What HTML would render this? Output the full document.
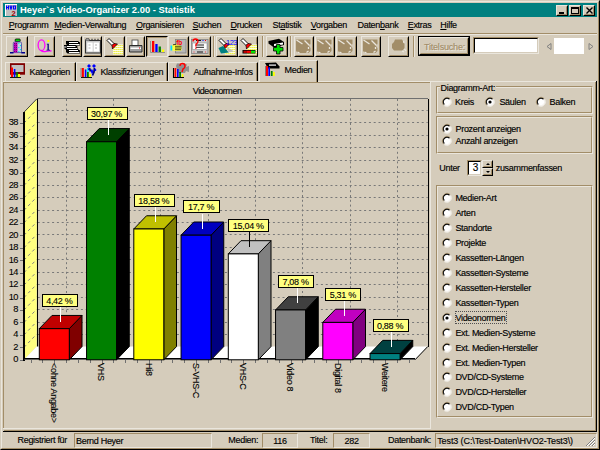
<!DOCTYPE html><html><head><meta charset="utf-8"><style>html,body{margin:0;padding:0;}body{width:600px;height:450px;overflow:hidden;position:relative;background:#D5CCBB;font-family:"Liberation Sans",sans-serif;font-size:9px;color:#000;}.t{position:absolute;white-space:nowrap;line-height:10px;letter-spacing:-0.3px;-webkit-text-stroke:0.15px currentColor;}svg{position:absolute;overflow:visible}</style></head><body>
<div style="position:absolute;left:0px;top:0px;width:600px;height:450px;box-sizing:border-box;border:1px solid;border-color:#D5CCBB #000000 #000000 #D5CCBB"></div>
<div style="position:absolute;left:1px;top:1px;width:598px;height:448px;box-sizing:border-box;border:1px solid;border-color:#EAE6DD #A28D68 #A28D68 #EAE6DD"></div>
<div style="position:absolute;left:3px;top:3px;width:594px;height:14px;background:#008080"></div>
<svg style="left:5px;top:4px" width="12" height="12"><rect x="0" y="0" width="12" height="12" fill="#C0C0C0"/><rect x="0" y="0" width="12" height="1" fill="#fff"/><rect x="0" y="0" width="1" height="12" fill="#fff"/><path d="M1.5,1.5 v4 M1.5,3.5 h2 M3.5,1.5 v4 M5,1.5 L6,5.5 L7,1.5 M8.5,2 h2 v3 h-2 Z" stroke="#0000FF" stroke-width="1.1" fill="none"/><text x="6.6" y="11.6" font-size="7.5" font-weight="bold" fill="#A00000" font-family="Liberation Sans">2</text></svg>
<div class="t" style="left:20px;top:4.6px;color:#fff;font-weight:bold;font-size:9.4px;letter-spacing:0;-webkit-text-stroke:0;">Heyer`s Video-Organizer 2.00 - Statistik</div>
<div style="position:absolute;left:556px;top:5px;width:10px;height:9px;border:1px solid;border-color:#EAE6DD #000000 #000000 #EAE6DD;background:#D5CCBB;"><div style="position:absolute;left:0;top:0;right:0;bottom:0;border:1px solid;border-color:#D5CCBB #A28D68 #A28D68 #D5CCBB"></div></div>
<div style="position:absolute;left:569px;top:5px;width:10px;height:9px;border:1px solid;border-color:#EAE6DD #000000 #000000 #EAE6DD;background:#D5CCBB;"><div style="position:absolute;left:0;top:0;right:0;bottom:0;border:1px solid;border-color:#D5CCBB #A28D68 #A28D68 #D5CCBB"></div></div>
<div style="position:absolute;left:583px;top:5px;width:10px;height:9px;border:1px solid;border-color:#EAE6DD #000000 #000000 #EAE6DD;background:#D5CCBB;"><div style="position:absolute;left:0;top:0;right:0;bottom:0;border:1px solid;border-color:#D5CCBB #A28D68 #A28D68 #D5CCBB"></div></div>
<div style="position:absolute;left:559px;top:12px;width:5px;height:2px;background:#000"></div>
<div style="position:absolute;left:571px;top:7px;width:6px;height:4px;border:1px solid #000;border-top-width:2px"></div>
<svg style="left:586px;top:7px" width="7" height="7"><path d="M0.5,0.5 L6.5,6.5 M6.5,0.5 L0.5,6.5" stroke="#000" stroke-width="1.4"/></svg>
<div class="t" style="left:8.8px;top:20px;"><u>P</u>rogramm</div>
<div class="t" style="left:54.3px;top:20px;"><u>M</u>edien-Verwaltung</div>
<div class="t" style="left:136px;top:20px;"><u>O</u>rganisieren</div>
<div class="t" style="left:192.5px;top:20px;"><u>S</u>uchen</div>
<div class="t" style="left:230.5px;top:20px;"><u>D</u>rucken</div>
<div class="t" style="left:272.5px;top:20px;">St<u>a</u>tistik</div>
<div class="t" style="left:310.8px;top:20px;"><u>V</u>orgaben</div>
<div class="t" style="left:357.5px;top:20px;">Daten<u>b</u>ank</div>
<div class="t" style="left:407.7px;top:20px;"><u>E</u>xtras</div>
<div class="t" style="left:440.3px;top:20px;"><u>H</u>ilfe</div>
<div style="position:absolute;left:3px;top:33px;width:594px;height:1px;background:#A28D68"></div>
<div style="position:absolute;left:3px;top:34px;width:594px;height:1px;background:#EAE6DD"></div>
<div style="position:absolute;left:6px;top:36px;width:20px;height:19px;border:1px solid;border-color:#EAE6DD #000000 #000000 #EAE6DD;background:#D5CCBB;"><div style="position:absolute;left:0;top:0;right:0;bottom:0;border:1px solid;border-color:#D5CCBB #A28D68 #A28D68 #D5CCBB"></div></div>
<div style="position:absolute;left:34px;top:36px;width:19px;height:19px;border:1px solid;border-color:#EAE6DD #000000 #000000 #EAE6DD;background:#D5CCBB;"><div style="position:absolute;left:0;top:0;right:0;bottom:0;border:1px solid;border-color:#D5CCBB #A28D68 #A28D68 #D5CCBB"></div></div>
<div style="position:absolute;left:62px;top:36px;width:18px;height:19px;border:1px solid;border-color:#EAE6DD #000000 #000000 #EAE6DD;background:#D5CCBB;"><div style="position:absolute;left:0;top:0;right:0;bottom:0;border:1px solid;border-color:#D5CCBB #A28D68 #A28D68 #D5CCBB"></div></div>
<div style="position:absolute;left:83px;top:36px;width:17px;height:19px;border:1px solid;border-color:#EAE6DD #000000 #000000 #EAE6DD;background:#D5CCBB;"><div style="position:absolute;left:0;top:0;right:0;bottom:0;border:1px solid;border-color:#D5CCBB #A28D68 #A28D68 #D5CCBB"></div></div>
<div style="position:absolute;left:104px;top:36px;width:19px;height:19px;border:1px solid;border-color:#EAE6DD #000000 #000000 #EAE6DD;background:#D5CCBB;"><div style="position:absolute;left:0;top:0;right:0;bottom:0;border:1px solid;border-color:#D5CCBB #A28D68 #A28D68 #D5CCBB"></div></div>
<div style="position:absolute;left:126px;top:36px;width:17px;height:19px;border:1px solid;border-color:#EAE6DD #000000 #000000 #EAE6DD;background:#D5CCBB;"><div style="position:absolute;left:0;top:0;right:0;bottom:0;border:1px solid;border-color:#D5CCBB #A28D68 #A28D68 #D5CCBB"></div></div>
<div style="position:absolute;left:146px;top:36px;width:20px;height:19px;border:1px solid;border-color:#000000 #EAE6DD #EAE6DD #000000;background:#D5CCBB"><div style="position:absolute;left:0;top:0;right:0;bottom:0;border:1px solid;border-color:#A28D68 #D5CCBB #D5CCBB #A28D68"></div></div>
<div style="position:absolute;left:168px;top:36px;width:19px;height:19px;border:1px solid;border-color:#EAE6DD #000000 #000000 #EAE6DD;background:#D5CCBB;"><div style="position:absolute;left:0;top:0;right:0;bottom:0;border:1px solid;border-color:#D5CCBB #A28D68 #A28D68 #D5CCBB"></div></div>
<div style="position:absolute;left:190px;top:36px;width:19px;height:19px;border:1px solid;border-color:#EAE6DD #000000 #000000 #EAE6DD;background:#D5CCBB;"><div style="position:absolute;left:0;top:0;right:0;bottom:0;border:1px solid;border-color:#D5CCBB #A28D68 #A28D68 #D5CCBB"></div></div>
<div style="position:absolute;left:216px;top:36px;width:20px;height:19px;border:1px solid;border-color:#EAE6DD #000000 #000000 #EAE6DD;background:#D5CCBB;"><div style="position:absolute;left:0;top:0;right:0;bottom:0;border:1px solid;border-color:#D5CCBB #A28D68 #A28D68 #D5CCBB"></div></div>
<div style="position:absolute;left:238px;top:36px;width:18px;height:19px;border:1px solid;border-color:#EAE6DD #000000 #000000 #EAE6DD;background:#D5CCBB;"><div style="position:absolute;left:0;top:0;right:0;bottom:0;border:1px solid;border-color:#D5CCBB #A28D68 #A28D68 #D5CCBB"></div></div>
<div style="position:absolute;left:266px;top:36px;width:20px;height:19px;border:1px solid;border-color:#EAE6DD #000000 #000000 #EAE6DD;background:#D5CCBB;"><div style="position:absolute;left:0;top:0;right:0;bottom:0;border:1px solid;border-color:#D5CCBB #A28D68 #A28D68 #D5CCBB"></div></div>
<div style="position:absolute;left:294px;top:36px;width:18px;height:19px;border:1px solid;border-color:#EAE6DD #000000 #000000 #EAE6DD;background:#D5CCBB;"><div style="position:absolute;left:0;top:0;right:0;bottom:0;border:1px solid;border-color:#D5CCBB #A28D68 #A28D68 #D5CCBB"></div></div>
<div style="position:absolute;left:315px;top:36px;width:18px;height:19px;border:1px solid;border-color:#EAE6DD #000000 #000000 #EAE6DD;background:#D5CCBB;"><div style="position:absolute;left:0;top:0;right:0;bottom:0;border:1px solid;border-color:#D5CCBB #A28D68 #A28D68 #D5CCBB"></div></div>
<div style="position:absolute;left:336px;top:36px;width:19px;height:19px;border:1px solid;border-color:#EAE6DD #000000 #000000 #EAE6DD;background:#D5CCBB;"><div style="position:absolute;left:0;top:0;right:0;bottom:0;border:1px solid;border-color:#D5CCBB #A28D68 #A28D68 #D5CCBB"></div></div>
<div style="position:absolute;left:361px;top:36px;width:18px;height:19px;border:1px solid;border-color:#EAE6DD #000000 #000000 #EAE6DD;background:#D5CCBB;"><div style="position:absolute;left:0;top:0;right:0;bottom:0;border:1px solid;border-color:#D5CCBB #A28D68 #A28D68 #D5CCBB"></div></div>
<div style="position:absolute;left:388px;top:36px;width:19px;height:19px;border:1px solid;border-color:#EAE6DD #000000 #000000 #EAE6DD;background:#D5CCBB;"><div style="position:absolute;left:0;top:0;right:0;bottom:0;border:1px solid;border-color:#D5CCBB #A28D68 #A28D68 #D5CCBB"></div></div>
<div style="position:absolute;left:212.5px;top:36px;width:1px;height:21px;background:#A28D68"></div>
<div style="position:absolute;left:213.5px;top:36px;width:1px;height:21px;background:#EAE6DD"></div>
<div style="position:absolute;left:261.5px;top:36px;width:1px;height:21px;background:#A28D68"></div>
<div style="position:absolute;left:262.5px;top:36px;width:1px;height:21px;background:#EAE6DD"></div>
<div style="position:absolute;left:289.5px;top:36px;width:1px;height:21px;background:#A28D68"></div>
<div style="position:absolute;left:290.5px;top:36px;width:1px;height:21px;background:#EAE6DD"></div>
<div style="position:absolute;left:412.5px;top:36px;width:1px;height:21px;background:#A28D68"></div>
<div style="position:absolute;left:413.5px;top:36px;width:1px;height:21px;background:#EAE6DD"></div>
<div style="position:absolute;left:418px;top:36px;width:50px;height:18px;border:1px solid #000;"></div>
<div style="position:absolute;left:419px;top:37px;width:48px;height:16px;border:1px solid;border-color:#EAE6DD #000000 #000000 #EAE6DD;background:#D5CCBB;"><div style="position:absolute;left:0;top:0;right:0;bottom:0;border:1px solid;border-color:#D5CCBB #A28D68 #A28D68 #D5CCBB"></div></div>
<div class="t" style="left:424px;top:41.5px;color:#A28D68;text-shadow:1px 1px 0 #EAE6DD;letter-spacing:-0.2px">Titelsuche:</div>
<div style="position:absolute;left:473px;top:37px;width:64px;height:15px;border:1px solid;border-color:#A28D68 #EAE6DD #EAE6DD #A28D68;background:#FFFFFF;"><div style="position:absolute;left:0;top:0;right:0;bottom:0;border:1px solid;border-color:#000000 #D5CCBB #D5CCBB #000000"></div></div>
<svg style="left:546px;top:43px" width="6" height="7"><path d="M5,0.5 L1,3.5 L5,6.5 Z" fill="none" stroke="#808080"/></svg>
<div style="position:absolute;left:554px;top:38px;width:30px;height:16px;background:#fff"></div>
<svg style="left:588px;top:43px" width="6" height="7"><path d="M1,0.5 L5,3.5 L1,6.5 Z" fill="none" stroke="#808080"/></svg>
<div style="position:absolute;left:5px;top:62px;width:69px;height:19px;border-left:1px solid #EAE6DD;border-top:1px solid #EAE6DD;border-right:1px solid #000000;background:#D5CCBB"></div>
<div style="position:absolute;left:74px;top:63px;width:1px;height:18px;background:#A28D68"></div>
<div class="t" style="left:29.5px;top:66.8px;">Kategorien</div>
<div style="position:absolute;left:76px;top:62px;width:90px;height:19px;border-left:1px solid #EAE6DD;border-top:1px solid #EAE6DD;border-right:1px solid #000000;background:#D5CCBB"></div>
<div style="position:absolute;left:166px;top:63px;width:1px;height:18px;background:#A28D68"></div>
<div class="t" style="left:100.4px;top:66.8px;">Klassifizierungen</div>
<div style="position:absolute;left:168px;top:62px;width:88px;height:19px;border-left:1px solid #EAE6DD;border-top:1px solid #EAE6DD;border-right:1px solid #000000;background:#D5CCBB"></div>
<div style="position:absolute;left:256px;top:63px;width:1px;height:18px;background:#A28D68"></div>
<div class="t" style="left:193.4px;top:66.8px;">Aufnahme-Infos</div>
<div style="position:absolute;left:3px;top:81px;width:594px;height:1px;background:#EAE6DD"></div>
<div style="position:absolute;left:3px;top:81px;width:1px;height:2px;background:#EAE6DD"></div>
<div style="position:absolute;left:595px;top:82px;width:1px;height:349px;background:#A28D68"></div>
<div style="position:absolute;left:596px;top:81px;width:1px;height:351px;background:#000000"></div>
<div style="position:absolute;left:4px;top:430px;width:592px;height:1px;background:#A28D68"></div>
<div style="position:absolute;left:3px;top:431px;width:594px;height:1px;background:#000000"></div>
<div style="position:absolute;left:259px;top:60px;width:57px;height:22px;border-left:1px solid #EAE6DD;border-top:1px solid #EAE6DD;border-right:1px solid #000000;background:#D5CCBB"></div>
<div style="position:absolute;left:316px;top:61px;width:1px;height:21px;background:#A28D68"></div>
<div class="t" style="left:284.6px;top:64.6px;">Medien</div>
<svg style="left:0;top:0" width="600" height="90">
<rect x="15.2" y="39" width="5" height="2.6" rx="0.8" fill="#00E000" stroke="#000" stroke-width="0.8"/>
<path d="M13.3,52.6 L13.3,43.3 Q13.3,42 14.6,42 L20.3,42 Q21.5,42 21.5,43.3 L21.5,52.6 Z" fill="#C8D8E0" stroke="#4040A0" stroke-width="0.8"/>
<rect x="13.8" y="42.5" width="3.7" height="10" fill="#C000C0"/>
<rect x="14.2" y="43" width="0.9" height="0.9" fill="#600060"/>
<rect x="14.2" y="45" width="0.9" height="0.9" fill="#600060"/>
<rect x="14.2" y="47" width="0.9" height="0.9" fill="#600060"/>
<rect x="14.2" y="49" width="0.9" height="0.9" fill="#600060"/>
<rect x="14.2" y="51" width="0.9" height="0.9" fill="#600060"/>
<rect x="16.0" y="43" width="0.9" height="0.9" fill="#600060"/>
<rect x="16.0" y="45" width="0.9" height="0.9" fill="#600060"/>
<rect x="16.0" y="47" width="0.9" height="0.9" fill="#600060"/>
<rect x="16.0" y="49" width="0.9" height="0.9" fill="#600060"/>
<rect x="16.0" y="51" width="0.9" height="0.9" fill="#600060"/>
<rect x="18.3" y="43" width="1.1" height="1.1" fill="#00E0F0"/>
<rect x="19.900000000000002" y="45" width="1.1" height="1.1" fill="#00E0F0"/>
<rect x="18.3" y="47" width="1.1" height="1.1" fill="#00E0F0"/>
<rect x="19.900000000000002" y="49" width="1.1" height="1.1" fill="#00E0F0"/>
<rect x="18.3" y="51" width="1.1" height="1.1" fill="#00E0F0"/>
<path d="M10,52.8 L13.5,52.8 M21.3,52.8 L25,52.8" stroke="#000090" stroke-width="1.4"/>
<ellipse cx="41.5" cy="45.2" rx="3.4" ry="5.4" fill="none" stroke="#FF00FF" stroke-width="1.25"/>
<path d="M40.5,50 Q43,52.5 46,51.3 Q48.5,50.5 51.5,51" fill="none" stroke="#FF00FF" stroke-width="1.3"/>
<rect x="47.3" y="40" width="2" height="2" fill="#FFFF00"/>
<path d="M46.8,43.8 L48.8,43.8 L48.8,49.8 L50,49.8 L50,50.5 L46.5,50.5 L46.5,49.8 L47.5,49.8 L47.5,44.5 L46.8,44.5 Z" fill="#000080"/>
<path d="M66,41 L78,41 L80,42.5 L80,45.5 L67.5,45.5 L66,44 Z" fill="#000"/>
<rect x="69" y="42" width="9" height="1" fill="#fff"/>
<rect x="69" y="44" width="10.5" height="1" fill="#fff"/>
<path d="M64,45 L75.5,45 L77.5,46.5 L77.5,49.5 L65.5,49.5 L64,48 Z" fill="#000"/>
<rect x="67" y="46" width="8.5" height="1" fill="#fff"/>
<rect x="67" y="48" width="10.0" height="1" fill="#fff"/>
<rect x="64" y="46" width="2.5" height="2" fill="#808080"/>
<path d="M66,49 L78,49 L80,50.5 L80,53.5 L67.5,53.5 L66,52 Z" fill="#000"/>
<rect x="69" y="50" width="9" height="1" fill="#fff"/>
<rect x="69" y="52" width="10.5" height="1" fill="#fff"/>
<rect x="85.5" y="40.5" width="15" height="12.5" fill="#C8C8C8" stroke="#303030" stroke-width="1"/>
<path d="M85.5,40.5 L86,38.8 L89,38.8 L89.5,40.5" fill="#C8C8C8" stroke="#303030" stroke-width="0.8"/>
<path d="M91,39.3 h2 M94,39.3 h2 M97,39.3 h2" stroke="#404040" stroke-width="0.8"/>
<rect x="87.3" y="42.5" width="5.4" height="9" fill="#fff"/>
<rect x="93.6" y="42.5" width="5.4" height="9" fill="#fff"/>
<path d="M88.5,45 h2 M88.5,48 h2 M95,45 h2 M95,48 h2" stroke="#A0A0A0" stroke-width="0.8"/>
<rect x="113" y="44.5" width="10" height="10" fill="#FFFFFF"/>
<rect x="113.5" y="45.0" width="1.2" height="1.2" fill="#E8E800"/>
<rect x="113.5" y="47.0" width="1.2" height="1.2" fill="#E8E800"/>
<rect x="113.5" y="49.0" width="1.2" height="1.2" fill="#E8E800"/>
<rect x="113.5" y="51.0" width="1.2" height="1.2" fill="#E8E800"/>
<rect x="113.5" y="53.0" width="1.2" height="1.2" fill="#E8E800"/>
<rect x="115.5" y="45.0" width="1.2" height="1.2" fill="#E8E800"/>
<rect x="115.5" y="47.0" width="1.2" height="1.2" fill="#E8E800"/>
<rect x="115.5" y="49.0" width="1.2" height="1.2" fill="#E8E800"/>
<rect x="115.5" y="51.0" width="1.2" height="1.2" fill="#E8E800"/>
<rect x="115.5" y="53.0" width="1.2" height="1.2" fill="#E8E800"/>
<rect x="117.5" y="45.0" width="1.2" height="1.2" fill="#E8E800"/>
<rect x="117.5" y="47.0" width="1.2" height="1.2" fill="#E8E800"/>
<rect x="117.5" y="49.0" width="1.2" height="1.2" fill="#E8E800"/>
<rect x="117.5" y="51.0" width="1.2" height="1.2" fill="#E8E800"/>
<rect x="117.5" y="53.0" width="1.2" height="1.2" fill="#E8E800"/>
<rect x="119.5" y="45.0" width="1.2" height="1.2" fill="#E8E800"/>
<rect x="119.5" y="47.0" width="1.2" height="1.2" fill="#E8E800"/>
<rect x="119.5" y="49.0" width="1.2" height="1.2" fill="#E8E800"/>
<rect x="119.5" y="51.0" width="1.2" height="1.2" fill="#E8E800"/>
<rect x="119.5" y="53.0" width="1.2" height="1.2" fill="#E8E800"/>
<rect x="121.5" y="45.0" width="1.2" height="1.2" fill="#E8E800"/>
<rect x="121.5" y="47.0" width="1.2" height="1.2" fill="#E8E800"/>
<rect x="121.5" y="49.0" width="1.2" height="1.2" fill="#E8E800"/>
<rect x="121.5" y="51.0" width="1.2" height="1.2" fill="#E8E800"/>
<rect x="121.5" y="53.0" width="1.2" height="1.2" fill="#E8E800"/>
<path d="M107,40.5 L109,38.5 L114,43.5 L112,45.5 Z" fill="#fff" stroke="#000" stroke-width="0.9"/>
<path d="M112,45.5 L114,43.5 L117.5,44.0 L112.5,49.0 Z" fill="#FF0000" stroke="#000" stroke-width="0.7"/>
<rect x="132" y="40" width="6" height="5.5" fill="#fff" stroke="#404040" stroke-width="0.8"/>
<path d="M129.5,45.5 L142,45.5 L142,52 L129.5,52 Z" fill="#A0A0A0" stroke="#202020" stroke-width="0.9"/>
<rect x="130.5" y="47.5" width="10.5" height="1.5" fill="#fff"/>
<rect x="139" y="47.5" width="1" height="1" fill="#E00000"/>
<path d="M150.5,41 L150.5,52.5 L165,52.5" fill="none" stroke="#808080" stroke-width="0.8"/>
<rect x="152" y="41" width="2.3" height="11" fill="#FF0000"/>
<rect x="155.3" y="44" width="2.3" height="8" fill="#0000FF"/>
<rect x="158.6" y="46.5" width="2.3" height="5.5" fill="#008000"/>
<rect x="161.9" y="49.5" width="2.3" height="2.5" fill="#FFFF00"/>
<rect x="175.5" y="39.5" width="10.5" height="13.5" fill="#B8B8B8" stroke="#808080" stroke-width="0.8"/>
<text x="176.3" y="45.3" font-family="Liberation Sans" font-weight="bold" font-size="6.5" fill="#FF0000" letter-spacing="-0.3">fb</text>
<path d="M172,45 L176,44.5 L181.5,46 L181.5,50.5 L176,51 L172,50.5 Z" fill="#FFFF40"/>
<path d="M175,46.3 L181.5,46.3 M175,48 L181.5,48 M175,49.7 L181,49.7 M173,44.8 L176,44.3" stroke="#000" stroke-width="0.7"/>
<rect x="170.5" y="45.5" width="1.8" height="5" fill="#00E0FF"/>
<rect x="191.5" y="39.5" width="16.5" height="14" fill="#C8C8C8" stroke="#808080" stroke-width="0.8"/>
<rect x="192.5" y="43" width="14.5" height="6.5" fill="#fff" stroke="#808080" stroke-width="0.5"/>
<path d="M196,40.5 L201,40.5 M196,45 L204,45 M196,47.3 L204,47.3 M197,52 L203,52" stroke="#000" stroke-width="0.9"/>
<path d="M193,41.5 Q193,39 195.5,39 Q198,39 198,41.5 Q198,43.2 196,44.2 L195.8,46.5" fill="none" stroke="#FF0000" stroke-width="1.3"/>
<rect x="195.2" y="47.5" width="1.3" height="1.3" fill="#FF0000"/>
<rect x="202.5" y="40" width="1" height="1" fill="#0000FF"/><rect x="205" y="40" width="1" height="1" fill="#FF0000"/>
<rect x="193.5" y="51.5" width="1" height="1" fill="#FF4040"/><rect x="205" y="51.5" width="1" height="1" fill="#FF4040"/>
<rect x="225" y="44.5" width="10" height="10" fill="#FFFFFF"/>
<rect x="225.5" y="45.0" width="1.2" height="1.2" fill="#E8E800"/>
<rect x="225.5" y="47.0" width="1.2" height="1.2" fill="#E8E800"/>
<rect x="225.5" y="49.0" width="1.2" height="1.2" fill="#E8E800"/>
<rect x="225.5" y="51.0" width="1.2" height="1.2" fill="#E8E800"/>
<rect x="225.5" y="53.0" width="1.2" height="1.2" fill="#E8E800"/>
<rect x="227.5" y="45.0" width="1.2" height="1.2" fill="#E8E800"/>
<rect x="227.5" y="47.0" width="1.2" height="1.2" fill="#E8E800"/>
<rect x="227.5" y="49.0" width="1.2" height="1.2" fill="#E8E800"/>
<rect x="227.5" y="51.0" width="1.2" height="1.2" fill="#E8E800"/>
<rect x="227.5" y="53.0" width="1.2" height="1.2" fill="#E8E800"/>
<rect x="229.5" y="45.0" width="1.2" height="1.2" fill="#E8E800"/>
<rect x="229.5" y="47.0" width="1.2" height="1.2" fill="#E8E800"/>
<rect x="229.5" y="49.0" width="1.2" height="1.2" fill="#E8E800"/>
<rect x="229.5" y="51.0" width="1.2" height="1.2" fill="#E8E800"/>
<rect x="229.5" y="53.0" width="1.2" height="1.2" fill="#E8E800"/>
<rect x="231.5" y="45.0" width="1.2" height="1.2" fill="#E8E800"/>
<rect x="231.5" y="47.0" width="1.2" height="1.2" fill="#E8E800"/>
<rect x="231.5" y="49.0" width="1.2" height="1.2" fill="#E8E800"/>
<rect x="231.5" y="51.0" width="1.2" height="1.2" fill="#E8E800"/>
<rect x="231.5" y="53.0" width="1.2" height="1.2" fill="#E8E800"/>
<rect x="233.5" y="45.0" width="1.2" height="1.2" fill="#E8E800"/>
<rect x="233.5" y="47.0" width="1.2" height="1.2" fill="#E8E800"/>
<rect x="233.5" y="49.0" width="1.2" height="1.2" fill="#E8E800"/>
<rect x="233.5" y="51.0" width="1.2" height="1.2" fill="#E8E800"/>
<rect x="233.5" y="53.0" width="1.2" height="1.2" fill="#E8E800"/>
<path d="M219,40.5 L221,38.5 L226,43.5 L224,45.5 Z" fill="#fff" stroke="#000" stroke-width="0.9"/>
<path d="M224,45.5 L226,43.5 L229.5,44.0 L224.5,49.0 Z" fill="#FF0000" stroke="#000" stroke-width="0.7"/>
<path d="M218.5,48 L223,46 L229,52.5 L221,53.5 Z" fill="#008080"/>
<path d="M227,47 L234,51.5 L228,52.5 Z" fill="#C0C0C0"/>
<text x="226" y="44.5" font-family="Liberation Sans" font-size="7.5" fill="#0000FF" letter-spacing="-0.5">123</text>
<rect x="247" y="44.5" width="10" height="10" fill="#FFFFFF"/>
<rect x="247.5" y="45.0" width="1.2" height="1.2" fill="#E8E800"/>
<rect x="247.5" y="47.0" width="1.2" height="1.2" fill="#E8E800"/>
<rect x="247.5" y="49.0" width="1.2" height="1.2" fill="#E8E800"/>
<rect x="247.5" y="51.0" width="1.2" height="1.2" fill="#E8E800"/>
<rect x="247.5" y="53.0" width="1.2" height="1.2" fill="#E8E800"/>
<rect x="249.5" y="45.0" width="1.2" height="1.2" fill="#E8E800"/>
<rect x="249.5" y="47.0" width="1.2" height="1.2" fill="#E8E800"/>
<rect x="249.5" y="49.0" width="1.2" height="1.2" fill="#E8E800"/>
<rect x="249.5" y="51.0" width="1.2" height="1.2" fill="#E8E800"/>
<rect x="249.5" y="53.0" width="1.2" height="1.2" fill="#E8E800"/>
<rect x="251.5" y="45.0" width="1.2" height="1.2" fill="#E8E800"/>
<rect x="251.5" y="47.0" width="1.2" height="1.2" fill="#E8E800"/>
<rect x="251.5" y="49.0" width="1.2" height="1.2" fill="#E8E800"/>
<rect x="251.5" y="51.0" width="1.2" height="1.2" fill="#E8E800"/>
<rect x="251.5" y="53.0" width="1.2" height="1.2" fill="#E8E800"/>
<rect x="253.5" y="45.0" width="1.2" height="1.2" fill="#E8E800"/>
<rect x="253.5" y="47.0" width="1.2" height="1.2" fill="#E8E800"/>
<rect x="253.5" y="49.0" width="1.2" height="1.2" fill="#E8E800"/>
<rect x="253.5" y="51.0" width="1.2" height="1.2" fill="#E8E800"/>
<rect x="253.5" y="53.0" width="1.2" height="1.2" fill="#E8E800"/>
<rect x="255.5" y="45.0" width="1.2" height="1.2" fill="#E8E800"/>
<rect x="255.5" y="47.0" width="1.2" height="1.2" fill="#E8E800"/>
<rect x="255.5" y="49.0" width="1.2" height="1.2" fill="#E8E800"/>
<rect x="255.5" y="51.0" width="1.2" height="1.2" fill="#E8E800"/>
<rect x="255.5" y="53.0" width="1.2" height="1.2" fill="#E8E800"/>
<path d="M241,40.5 L243,38.5 L248,43.5 L246,45.5 Z" fill="#fff" stroke="#000" stroke-width="0.9"/>
<path d="M246,45.5 L248,43.5 L251.5,44.0 L246.5,49.0 Z" fill="#FF0000" stroke="#000" stroke-width="0.7"/>
<rect x="242.5" y="50" width="13" height="3.5" fill="#000"/><rect x="243.5" y="50.7" width="3" height="2.2" fill="#C00000"/><rect x="246.5" y="50.7" width="4.5" height="2.2" fill="#FF0000"/><rect x="251" y="50.7" width="4" height="2.2" fill="#00F000"/>
<path d="M268.5,41 L279,38.8 L284,42 L284,45 L274,47.5 L268.5,43.5 Z" fill="#000"/>
<path d="M274,44 L283,42.5 L283,44.5 L274,46 Z" fill="#fff"/>
<path d="M276.5,44.5 h3.5 v3 h3 v3.5 h-3 v3 h-3.5 v-3 h-3 v-3.5 h3 Z" fill="#00E000" stroke="#000" stroke-width="0.8"/>
<path d="M296.0,39.5 L310.5,39.5 L310.5,44 L309.0,46 L310.5,48 L310.5,51 L308.5,53 L298.0,53 L296.0,51 Z" fill="#A28D68"/>
<path d="M296.5,40 L302.5,44 M304.5,40.5 L309.5,45.5 M308.5,47 L308.5,49 M297.5,52 L299.5,53 M306.5,52.5 L308.5,51" stroke="#EAE6DD" stroke-width="1.3"/>
<path d="M317.0,39.5 L331.5,39.5 L331.5,44 L330.0,46 L331.5,48 L331.5,51 L329.5,53 L319.0,53 L317.0,51 Z" fill="#A28D68"/>
<path d="M317.5,40 L323.5,44 M325.5,40.5 L330.5,45.5 M329.5,47 L329.5,49 M318.5,52 L320.5,53 M327.5,52.5 L329.5,51" stroke="#EAE6DD" stroke-width="1.3"/>
<path d="M338.0,39.5 L352.5,39.5 L352.5,44 L351.0,46 L352.5,48 L352.5,51 L350.5,53 L340.0,53 L338.0,51 Z" fill="#A28D68"/>
<path d="M338.5,40 L344.5,44 M346.5,40.5 L351.5,45.5 M350.5,47 L350.5,49 M339.5,52 L341.5,53 M348.5,52.5 L350.5,51" stroke="#EAE6DD" stroke-width="1.3"/>
<path d="M363.0,39.5 L377.5,39.5 L377.5,44 L376.0,46 L377.5,48 L377.5,51 L375.5,53 L365.0,53 L363.0,51 Z" fill="#A28D68"/>
<path d="M363.5,40 L369.5,44 M371.5,40.5 L376.5,45.5 M375.5,47 L375.5,49 M364.5,52 L366.5,53 M373.5,52.5 L375.5,51" stroke="#EAE6DD" stroke-width="1.3"/>
<path d="M395,39.5 L402,39.5 L403.5,42 L404.5,44 L404.5,48 L402.5,50.5 L394,50.5 L392,48 L392,44 L394,42 Z" fill="#A28D68"/>
<path d="M403.5,41 L404,43 M404.5,49 L406,51 M402,51 L404,52" stroke="#EAE6DD" stroke-width="1.2"/>
<rect x="10" y="63.2" width="15" height="11.5" fill="#800000"/>
<rect x="11.5" y="65" width="12" height="7" fill="#C0C0C0"/>
<rect x="11" y="67.5" width="2" height="9.5" fill="#FF0000"/><rect x="13.8" y="69" width="1.6" height="8" fill="#0000FF"/><rect x="16.2" y="72" width="1.6" height="5" fill="#008000"/><rect x="18" y="74" width="2" height="3" fill="#FFFF00"/>
<rect x="10" y="77" width="11" height="0.9" fill="#000"/>
<rect x="80.5" y="68" width="1" height="9" fill="#808080"/><rect x="81.8" y="68" width="2.1" height="9" fill="#FF0000"/><rect x="84.8" y="69.5" width="1.6" height="7.5" fill="#0000FF"/><rect x="87" y="68" width="1.8" height="4" fill="#00FFFF"/><rect x="87" y="72" width="1.8" height="5" fill="#008000"/><rect x="89" y="74" width="2" height="3" fill="#FFFF00"/>
<rect x="81" y="77" width="11" height="0.9" fill="#000"/>
<path d="M87,66 L89,64 L91,66 L89,68 Z M92,66 L94,64 L96,66 L94,68 Z M90.5,70.5 L92,69 L93.5,72 L92,74 Z" fill="#0000FF"/>
<path d="M89.5,68 L90.5,71.5 M94.5,68 L94,72 L92.5,75.5" stroke="#000080" stroke-width="1.8"/>
<path d="M88,68.5 L89,70 M91.5,70 L92.5,73 M95.5,69 L95.5,71" stroke="#0000FF" stroke-width="1.3"/>
<path d="M176,66 L177,63.5 L180,63.5 L181,65 L184,63.5 L187,64.5 L186,67 L189,66 L189,72 L186,71 L185,73 L178,73 Z" fill="#909090"/>
<path d="M180,66 Q180,63.5 182.5,63.5 Q185,63.5 185,66 Q185,68 183,69 L182,72" fill="none" stroke="#FF0000" stroke-width="1.4"/>
<path d="M173.5,68 L173.5,77.5 L184,77.5" fill="none" stroke="#000" stroke-width="1.1"/>
<rect x="174.5" y="68" width="1.8" height="9" fill="#FF0000"/><rect x="177" y="69" width="1.6" height="8" fill="#0000FF"/><rect x="179.2" y="72" width="1.8" height="5" fill="#008000"/><rect x="181.8" y="74" width="1.5" height="3" fill="#FFFF00"/>
<path d="M265,63 L276,62.5 L279.5,66.5 L279.5,68.5 L268,68.5 Z" fill="#000"/>
<rect x="269" y="64.5" width="7" height="1.2" fill="#fff"/>
<rect x="265" y="66" width="1" height="10" fill="#808080"/><rect x="266" y="66" width="2" height="10" fill="#FF0000"/><rect x="268.3" y="67.2" width="1.7" height="8.8" fill="#0000FF"/><rect x="270.8" y="71" width="1.8" height="5" fill="#008000"/><rect x="273" y="72" width="1.8" height="4" fill="#FFFF00"/>
</svg>
<div style="position:absolute;left:3px;top:82px;width:427px;height:1px;background:#A28D68"></div>
<div style="position:absolute;left:3px;top:82px;width:1px;height:346px;background:#A28D68"></div>
<div style="position:absolute;left:430px;top:82px;width:1px;height:347px;background:#EAE6DD"></div>
<div style="position:absolute;left:3px;top:428px;width:428px;height:1px;background:#EAE6DD"></div>
<div class="t" style="left:192.7px;top:85.5px;letter-spacing:-0.4px">Videonormen</div>
<svg style="left:0;top:0" width="600" height="450" shape-rendering="crispEdges">
<line x1="37.7" y1="334.5" x2="427.7" y2="334.5" stroke="#787878" stroke-dasharray="2,2.8" shape-rendering="auto"/>
<line x1="37.7" y1="322.5" x2="427.7" y2="322.5" stroke="#787878" stroke-dasharray="2,2.8" shape-rendering="auto"/>
<line x1="37.7" y1="309.5" x2="427.7" y2="309.5" stroke="#787878" stroke-dasharray="2,2.8" shape-rendering="auto"/>
<line x1="37.7" y1="297.5" x2="427.7" y2="297.5" stroke="#787878" stroke-dasharray="2,2.8" shape-rendering="auto"/>
<line x1="37.7" y1="284.5" x2="427.7" y2="284.5" stroke="#787878" stroke-dasharray="2,2.8" shape-rendering="auto"/>
<line x1="37.7" y1="272.5" x2="427.7" y2="272.5" stroke="#787878" stroke-dasharray="2,2.8" shape-rendering="auto"/>
<line x1="37.7" y1="259.5" x2="427.7" y2="259.5" stroke="#787878" stroke-dasharray="2,2.8" shape-rendering="auto"/>
<line x1="37.7" y1="247.5" x2="427.7" y2="247.5" stroke="#787878" stroke-dasharray="2,2.8" shape-rendering="auto"/>
<line x1="37.7" y1="234.5" x2="427.7" y2="234.5" stroke="#787878" stroke-dasharray="2,2.8" shape-rendering="auto"/>
<line x1="37.7" y1="222.5" x2="427.7" y2="222.5" stroke="#787878" stroke-dasharray="2,2.8" shape-rendering="auto"/>
<line x1="37.7" y1="210.5" x2="427.7" y2="210.5" stroke="#787878" stroke-dasharray="2,2.8" shape-rendering="auto"/>
<line x1="37.7" y1="197.5" x2="427.7" y2="197.5" stroke="#787878" stroke-dasharray="2,2.8" shape-rendering="auto"/>
<line x1="37.7" y1="185.5" x2="427.7" y2="185.5" stroke="#787878" stroke-dasharray="2,2.8" shape-rendering="auto"/>
<line x1="37.7" y1="172.5" x2="427.7" y2="172.5" stroke="#787878" stroke-dasharray="2,2.8" shape-rendering="auto"/>
<line x1="37.7" y1="160.5" x2="427.7" y2="160.5" stroke="#787878" stroke-dasharray="2,2.8" shape-rendering="auto"/>
<line x1="37.7" y1="147.5" x2="427.7" y2="147.5" stroke="#787878" stroke-dasharray="2,2.8" shape-rendering="auto"/>
<line x1="37.7" y1="135.5" x2="427.7" y2="135.5" stroke="#787878" stroke-dasharray="2,2.8" shape-rendering="auto"/>
<line x1="37.7" y1="122.5" x2="427.7" y2="122.5" stroke="#787878" stroke-dasharray="2,2.8" shape-rendering="auto"/>
<line x1="37.7" y1="110.5" x2="427.7" y2="110.5" stroke="#787878" stroke-dasharray="2,2.8" shape-rendering="auto"/>
<line x1="66.5" y1="99" x2="66.5" y2="346.6" stroke="#787878" stroke-dasharray="2,2.8" shape-rendering="auto"/>
<line x1="113.5" y1="99" x2="113.5" y2="346.6" stroke="#787878" stroke-dasharray="2,2.8" shape-rendering="auto"/>
<line x1="160.5" y1="99" x2="160.5" y2="346.6" stroke="#787878" stroke-dasharray="2,2.8" shape-rendering="auto"/>
<line x1="208.5" y1="99" x2="208.5" y2="346.6" stroke="#787878" stroke-dasharray="2,2.8" shape-rendering="auto"/>
<line x1="255.5" y1="99" x2="255.5" y2="346.6" stroke="#787878" stroke-dasharray="2,2.8" shape-rendering="auto"/>
<line x1="302.5" y1="99" x2="302.5" y2="346.6" stroke="#787878" stroke-dasharray="2,2.8" shape-rendering="auto"/>
<line x1="350.5" y1="99" x2="350.5" y2="346.6" stroke="#787878" stroke-dasharray="2,2.8" shape-rendering="auto"/>
<line x1="397.5" y1="99" x2="397.5" y2="346.6" stroke="#787878" stroke-dasharray="2,2.8" shape-rendering="auto"/>
<line x1="36.7" y1="98.5" x2="428.2" y2="98.5" stroke="#707070"/>
<line x1="428.2" y1="99" x2="428.2" y2="346.6" stroke="#000"/>
<polygon points="24,359.8 24,112.2 36.7,99 36.7,346.6" fill="#FFFF80" shape-rendering="auto"/>
<line x1="24" y1="347.34000000000003" x2="36.7" y2="334.14000000000004" stroke="#808080" stroke-dasharray="3,3" shape-rendering="auto"/>
<line x1="24" y1="334.88" x2="36.7" y2="321.68" stroke="#808080" stroke-dasharray="3,3" shape-rendering="auto"/>
<line x1="24" y1="322.42" x2="36.7" y2="309.22" stroke="#808080" stroke-dasharray="3,3" shape-rendering="auto"/>
<line x1="24" y1="309.96000000000004" x2="36.7" y2="296.76" stroke="#808080" stroke-dasharray="3,3" shape-rendering="auto"/>
<line x1="24" y1="297.5" x2="36.7" y2="284.3" stroke="#808080" stroke-dasharray="3,3" shape-rendering="auto"/>
<line x1="24" y1="285.04" x2="36.7" y2="271.84000000000003" stroke="#808080" stroke-dasharray="3,3" shape-rendering="auto"/>
<line x1="24" y1="272.58000000000004" x2="36.7" y2="259.38" stroke="#808080" stroke-dasharray="3,3" shape-rendering="auto"/>
<line x1="24" y1="260.12" x2="36.7" y2="246.92000000000002" stroke="#808080" stroke-dasharray="3,3" shape-rendering="auto"/>
<line x1="24" y1="247.66" x2="36.7" y2="234.46" stroke="#808080" stroke-dasharray="3,3" shape-rendering="auto"/>
<line x1="24" y1="235.2" x2="36.7" y2="222.0" stroke="#808080" stroke-dasharray="3,3" shape-rendering="auto"/>
<line x1="24" y1="222.74" x2="36.7" y2="209.54000000000002" stroke="#808080" stroke-dasharray="3,3" shape-rendering="auto"/>
<line x1="24" y1="210.28" x2="36.7" y2="197.08" stroke="#808080" stroke-dasharray="3,3" shape-rendering="auto"/>
<line x1="24" y1="197.82" x2="36.7" y2="184.62" stroke="#808080" stroke-dasharray="3,3" shape-rendering="auto"/>
<line x1="24" y1="185.36" x2="36.7" y2="172.16000000000003" stroke="#808080" stroke-dasharray="3,3" shape-rendering="auto"/>
<line x1="24" y1="172.9" x2="36.7" y2="159.70000000000002" stroke="#808080" stroke-dasharray="3,3" shape-rendering="auto"/>
<line x1="24" y1="160.44" x2="36.7" y2="147.24" stroke="#808080" stroke-dasharray="3,3" shape-rendering="auto"/>
<line x1="24" y1="147.98" x2="36.7" y2="134.78" stroke="#808080" stroke-dasharray="3,3" shape-rendering="auto"/>
<line x1="24" y1="135.51999999999998" x2="36.7" y2="122.32" stroke="#808080" stroke-dasharray="3,3" shape-rendering="auto"/>
<line x1="24" y1="123.06" x2="36.7" y2="109.86000000000001" stroke="#808080" stroke-dasharray="3,3" shape-rendering="auto"/>
<line x1="37.2" y1="99" x2="37.2" y2="346.6" stroke="#000"/>
<line x1="23.5" y1="112.2" x2="23.5" y2="360.8" stroke="#000" stroke-width="2"/>
<line x1="24" y1="112.2" x2="36.7" y2="99" stroke="#404040" shape-rendering="auto"/>
<polygon points="24,359.8 36.7,346.6 427.7,346.6 415,359.8" fill="#FFFFFF" shape-rendering="auto"/>
<line x1="415" y1="359.8" x2="427.7" y2="346.6" stroke="#000" shape-rendering="auto"/>
<rect x="23" y="358" width="392" height="1.6" fill="#000" shape-rendering="auto"/>
<line x1="20" y1="360.5" x2="23" y2="360.5" stroke="#707070"/>
<line x1="20" y1="347.5" x2="23" y2="347.5" stroke="#707070"/>
<line x1="20" y1="335.5" x2="23" y2="335.5" stroke="#707070"/>
<line x1="20" y1="322.5" x2="23" y2="322.5" stroke="#707070"/>
<line x1="20" y1="310.5" x2="23" y2="310.5" stroke="#707070"/>
<line x1="20" y1="298.5" x2="23" y2="298.5" stroke="#707070"/>
<line x1="20" y1="285.5" x2="23" y2="285.5" stroke="#707070"/>
<line x1="20" y1="273.5" x2="23" y2="273.5" stroke="#707070"/>
<line x1="20" y1="260.5" x2="23" y2="260.5" stroke="#707070"/>
<line x1="20" y1="248.5" x2="23" y2="248.5" stroke="#707070"/>
<line x1="20" y1="235.5" x2="23" y2="235.5" stroke="#707070"/>
<line x1="20" y1="223.5" x2="23" y2="223.5" stroke="#707070"/>
<line x1="20" y1="210.5" x2="23" y2="210.5" stroke="#707070"/>
<line x1="20" y1="198.5" x2="23" y2="198.5" stroke="#707070"/>
<line x1="20" y1="185.5" x2="23" y2="185.5" stroke="#707070"/>
<line x1="20" y1="173.5" x2="23" y2="173.5" stroke="#707070"/>
<line x1="20" y1="160.5" x2="23" y2="160.5" stroke="#707070"/>
<line x1="20" y1="148.5" x2="23" y2="148.5" stroke="#707070"/>
<line x1="20" y1="136.5" x2="23" y2="136.5" stroke="#707070"/>
<line x1="20" y1="123.5" x2="23" y2="123.5" stroke="#707070"/>
<line x1="31.5" y1="360" x2="31.5" y2="363" stroke="#707070"/>
<line x1="42.5" y1="360" x2="42.5" y2="363" stroke="#707070"/>
<line x1="54.5" y1="360" x2="54.5" y2="364" stroke="#707070"/>
<line x1="66.5" y1="360" x2="66.5" y2="363" stroke="#707070"/>
<line x1="78.5" y1="360" x2="78.5" y2="363" stroke="#707070"/>
<line x1="90.5" y1="360" x2="90.5" y2="363" stroke="#707070"/>
<line x1="102.5" y1="360" x2="102.5" y2="364" stroke="#707070"/>
<line x1="113.5" y1="360" x2="113.5" y2="363" stroke="#707070"/>
<line x1="125.5" y1="360" x2="125.5" y2="363" stroke="#707070"/>
<line x1="137.5" y1="360" x2="137.5" y2="363" stroke="#707070"/>
<line x1="149.5" y1="360" x2="149.5" y2="364" stroke="#707070"/>
<line x1="161.5" y1="360" x2="161.5" y2="363" stroke="#707070"/>
<line x1="172.5" y1="360" x2="172.5" y2="363" stroke="#707070"/>
<line x1="184.5" y1="360" x2="184.5" y2="363" stroke="#707070"/>
<line x1="196.5" y1="360" x2="196.5" y2="364" stroke="#707070"/>
<line x1="208.5" y1="360" x2="208.5" y2="363" stroke="#707070"/>
<line x1="220.5" y1="360" x2="220.5" y2="363" stroke="#707070"/>
<line x1="231.5" y1="360" x2="231.5" y2="363" stroke="#707070"/>
<line x1="243.5" y1="360" x2="243.5" y2="364" stroke="#707070"/>
<line x1="255.5" y1="360" x2="255.5" y2="363" stroke="#707070"/>
<line x1="267.5" y1="360" x2="267.5" y2="363" stroke="#707070"/>
<line x1="279.5" y1="360" x2="279.5" y2="363" stroke="#707070"/>
<line x1="291.5" y1="360" x2="291.5" y2="364" stroke="#707070"/>
<line x1="302.5" y1="360" x2="302.5" y2="363" stroke="#707070"/>
<line x1="314.5" y1="360" x2="314.5" y2="363" stroke="#707070"/>
<line x1="326.5" y1="360" x2="326.5" y2="363" stroke="#707070"/>
<line x1="338.5" y1="360" x2="338.5" y2="364" stroke="#707070"/>
<line x1="350.5" y1="360" x2="350.5" y2="363" stroke="#707070"/>
<line x1="361.5" y1="360" x2="361.5" y2="363" stroke="#707070"/>
<line x1="373.5" y1="360" x2="373.5" y2="363" stroke="#707070"/>
<line x1="385.5" y1="360" x2="385.5" y2="364" stroke="#707070"/>
<line x1="397.5" y1="360" x2="397.5" y2="363" stroke="#707070"/>
<line x1="409.5" y1="360" x2="409.5" y2="363" stroke="#707070"/>
<polygon points="69.3,328.65000000000003 82.0,315.45000000000005 82.0,346.6 69.3,359.8" fill="#800000" stroke="#000" stroke-width="1" shape-rendering="auto"/>
<polygon points="39.3,328.65000000000003 52.0,315.45000000000005 82.0,315.45000000000005 69.3,328.65000000000003" fill="#C00000" stroke="#000" stroke-width="1" shape-rendering="auto"/>
<rect x="39.3" y="328.65000000000003" width="30" height="31.149999999999977" fill="#FF0000" stroke="#000" stroke-width="1" shape-rendering="auto"/>
<line x1="60.5" y1="322.05" x2="60.5" y2="306.95000000000005" stroke="#FFFFFF" stroke-width="1"/>
<rect x="42.5" y="294.5" width="35" height="12" fill="#FFFF80" stroke="#000"/>
<polygon points="116.55,141.75 129.25,128.55 129.25,346.6 116.55,359.8" fill="#000000" stroke="#000" stroke-width="1" shape-rendering="auto"/>
<polygon points="86.55,141.75 99.25,128.55 129.25,128.55 116.55,141.75" fill="#004000" stroke="#000" stroke-width="1" shape-rendering="auto"/>
<rect x="86.55" y="141.75" width="30" height="218.05" fill="#008000" stroke="#000" stroke-width="1" shape-rendering="auto"/>
<line x1="108.5" y1="135.15" x2="108.5" y2="120.05000000000001" stroke="#FFFFFF" stroke-width="1"/>
<rect x="87.5" y="107.5" width="40" height="12" fill="#FFFF80" stroke="#000"/>
<polygon points="163.8,228.97 176.5,215.77 176.5,346.6 163.8,359.8" fill="#808000" stroke="#000" stroke-width="1" shape-rendering="auto"/>
<polygon points="133.8,228.97 146.5,215.77 176.5,215.77 163.8,228.97" fill="#C0C000" stroke="#000" stroke-width="1" shape-rendering="auto"/>
<rect x="133.8" y="228.97" width="30" height="130.83" fill="#FFFF00" stroke="#000" stroke-width="1" shape-rendering="auto"/>
<line x1="155.5" y1="222.37" x2="155.5" y2="207.27" stroke="#FFFFFF" stroke-width="1"/>
<rect x="134.5" y="194.5" width="40" height="12" fill="#FFFF80" stroke="#000"/>
<polygon points="211.05,235.2 223.75,222.0 223.75,346.6 211.05,359.8" fill="#000080" stroke="#000" stroke-width="1" shape-rendering="auto"/>
<polygon points="181.05,235.2 193.75,222.0 223.75,222.0 211.05,235.2" fill="#0000C0" stroke="#000" stroke-width="1" shape-rendering="auto"/>
<rect x="181.05" y="235.2" width="30" height="124.60000000000002" fill="#0000FF" stroke="#000" stroke-width="1" shape-rendering="auto"/>
<line x1="202.5" y1="228.6" x2="202.5" y2="213.5" stroke="#FFFFFF" stroke-width="1"/>
<rect x="183.5" y="200.5" width="36" height="12" fill="#FFFF80" stroke="#000"/>
<polygon points="258.3,253.89 271.0,240.69 271.0,346.6 258.3,359.8" fill="#808080" stroke="#000" stroke-width="1" shape-rendering="auto"/>
<polygon points="228.3,253.89 241.0,240.69 271.0,240.69 258.3,253.89" fill="#C0C0C0" stroke="#000" stroke-width="1" shape-rendering="auto"/>
<rect x="228.3" y="253.89" width="30" height="105.91000000000003" fill="#FFFFFF" stroke="#000" stroke-width="1" shape-rendering="auto"/>
<line x1="249.5" y1="247.29" x2="249.5" y2="232.19" stroke="#000000" stroke-width="1"/>
<rect x="228.5" y="219.5" width="40" height="12" fill="#FFFF80" stroke="#000"/>
<polygon points="305.55,309.96000000000004 318.25,296.76000000000005 318.25,346.6 305.55,359.8" fill="#000000" stroke="#000" stroke-width="1" shape-rendering="auto"/>
<polygon points="275.55,309.96000000000004 288.25,296.76000000000005 318.25,296.76000000000005 305.55,309.96000000000004" fill="#404040" stroke="#000" stroke-width="1" shape-rendering="auto"/>
<rect x="275.55" y="309.96000000000004" width="30" height="49.839999999999975" fill="#808080" stroke="#000" stroke-width="1" shape-rendering="auto"/>
<line x1="297.5" y1="303.36" x2="297.5" y2="288.26000000000005" stroke="#FFFFFF" stroke-width="1"/>
<rect x="278.5" y="275.5" width="35" height="12" fill="#FFFF80" stroke="#000"/>
<polygon points="352.8,322.42 365.5,309.22 365.5,346.6 352.8,359.8" fill="#800080" stroke="#000" stroke-width="1" shape-rendering="auto"/>
<polygon points="322.8,322.42 335.5,309.22 365.5,309.22 352.8,322.42" fill="#C000C0" stroke="#000" stroke-width="1" shape-rendering="auto"/>
<rect x="322.8" y="322.42" width="30" height="37.379999999999995" fill="#FF00FF" stroke="#000" stroke-width="1" shape-rendering="auto"/>
<line x1="344.5" y1="315.82" x2="344.5" y2="300.72" stroke="#FFFFFF" stroke-width="1"/>
<rect x="325.5" y="288.5" width="35" height="12" fill="#FFFF80" stroke="#000"/>
<polygon points="400.05,353.57 412.75,340.37 412.75,346.6 400.05,359.8" fill="#000000" stroke="#000" stroke-width="1" shape-rendering="auto"/>
<polygon points="370.05,353.57 382.75,340.37 412.75,340.37 400.05,353.57" fill="#004040" stroke="#000" stroke-width="1" shape-rendering="auto"/>
<rect x="370.05" y="353.57" width="30" height="6.230000000000018" fill="#008080" stroke="#000" stroke-width="1" shape-rendering="auto"/>
<line x1="391.5" y1="346.96999999999997" x2="391.5" y2="331.87" stroke="#FFFFFF" stroke-width="1"/>
<rect x="373.5" y="319.5" width="35" height="12" fill="#FFFF80" stroke="#000"/>
</svg>
<div class="t" style="left:0px;width:18px;text-align:right;top:354.2px;font-size:9.3px;letter-spacing:-0.5px;-webkit-text-stroke:0.1px">0</div>
<div class="t" style="left:0px;width:18px;text-align:right;top:341.74px;font-size:9.3px;letter-spacing:-0.5px;-webkit-text-stroke:0.1px">2</div>
<div class="t" style="left:0px;width:18px;text-align:right;top:329.28px;font-size:9.3px;letter-spacing:-0.5px;-webkit-text-stroke:0.1px">4</div>
<div class="t" style="left:0px;width:18px;text-align:right;top:316.82px;font-size:9.3px;letter-spacing:-0.5px;-webkit-text-stroke:0.1px">6</div>
<div class="t" style="left:0px;width:18px;text-align:right;top:304.36px;font-size:9.3px;letter-spacing:-0.5px;-webkit-text-stroke:0.1px">8</div>
<div class="t" style="left:0px;width:18px;text-align:right;top:291.9px;font-size:9.3px;letter-spacing:-0.5px;-webkit-text-stroke:0.1px">10</div>
<div class="t" style="left:0px;width:18px;text-align:right;top:279.44px;font-size:9.3px;letter-spacing:-0.5px;-webkit-text-stroke:0.1px">12</div>
<div class="t" style="left:0px;width:18px;text-align:right;top:266.98px;font-size:9.3px;letter-spacing:-0.5px;-webkit-text-stroke:0.1px">14</div>
<div class="t" style="left:0px;width:18px;text-align:right;top:254.52px;font-size:9.3px;letter-spacing:-0.5px;-webkit-text-stroke:0.1px">16</div>
<div class="t" style="left:0px;width:18px;text-align:right;top:242.06px;font-size:9.3px;letter-spacing:-0.5px;-webkit-text-stroke:0.1px">18</div>
<div class="t" style="left:0px;width:18px;text-align:right;top:229.6px;font-size:9.3px;letter-spacing:-0.5px;-webkit-text-stroke:0.1px">20</div>
<div class="t" style="left:0px;width:18px;text-align:right;top:217.14000000000001px;font-size:9.3px;letter-spacing:-0.5px;-webkit-text-stroke:0.1px">22</div>
<div class="t" style="left:0px;width:18px;text-align:right;top:204.68px;font-size:9.3px;letter-spacing:-0.5px;-webkit-text-stroke:0.1px">24</div>
<div class="t" style="left:0px;width:18px;text-align:right;top:192.22px;font-size:9.3px;letter-spacing:-0.5px;-webkit-text-stroke:0.1px">26</div>
<div class="t" style="left:0px;width:18px;text-align:right;top:179.76000000000002px;font-size:9.3px;letter-spacing:-0.5px;-webkit-text-stroke:0.1px">28</div>
<div class="t" style="left:0px;width:18px;text-align:right;top:167.3px;font-size:9.3px;letter-spacing:-0.5px;-webkit-text-stroke:0.1px">30</div>
<div class="t" style="left:0px;width:18px;text-align:right;top:154.84px;font-size:9.3px;letter-spacing:-0.5px;-webkit-text-stroke:0.1px">32</div>
<div class="t" style="left:0px;width:18px;text-align:right;top:142.38px;font-size:9.3px;letter-spacing:-0.5px;-webkit-text-stroke:0.1px">34</div>
<div class="t" style="left:0px;width:18px;text-align:right;top:129.92px;font-size:9.3px;letter-spacing:-0.5px;-webkit-text-stroke:0.1px">36</div>
<div class="t" style="left:0px;width:18px;text-align:right;top:117.46000000000001px;font-size:9.3px;letter-spacing:-0.5px;-webkit-text-stroke:0.1px">38</div>
<div class="t" style="left:34.3px;width:50px;text-align:center;top:296px;-webkit-text-stroke:0.1px">4,42 %</div>
<div class="t" style="left:59.099999999999994px;top:363px;transform-origin:0 0;transform:rotate(90deg);-webkit-text-stroke:0.1px">&lt;ohne Angabe&gt;</div>
<div class="t" style="left:81.55px;width:50px;text-align:center;top:109px;-webkit-text-stroke:0.1px">30,97 %</div>
<div class="t" style="left:106.35px;top:363px;transform-origin:0 0;transform:rotate(90deg);-webkit-text-stroke:0.1px">VHS</div>
<div class="t" style="left:128.8px;width:50px;text-align:center;top:196px;-webkit-text-stroke:0.1px">18,58 %</div>
<div class="t" style="left:153.60000000000002px;top:363px;transform-origin:0 0;transform:rotate(90deg);-webkit-text-stroke:0.1px">Hi8</div>
<div class="t" style="left:176.05px;width:50px;text-align:center;top:202px;-webkit-text-stroke:0.1px">17,7 %</div>
<div class="t" style="left:200.85000000000002px;top:363px;transform-origin:0 0;transform:rotate(90deg);-webkit-text-stroke:0.1px">S-VHS-C</div>
<div class="t" style="left:223.3px;width:50px;text-align:center;top:221px;-webkit-text-stroke:0.1px">15,04 %</div>
<div class="t" style="left:248.10000000000002px;top:363px;transform-origin:0 0;transform:rotate(90deg);-webkit-text-stroke:0.1px">VHS-C</div>
<div class="t" style="left:270.55px;width:50px;text-align:center;top:277px;-webkit-text-stroke:0.1px">7,08 %</div>
<div class="t" style="left:295.35px;top:363px;transform-origin:0 0;transform:rotate(90deg);-webkit-text-stroke:0.1px">Video 8</div>
<div class="t" style="left:317.8px;width:50px;text-align:center;top:290px;-webkit-text-stroke:0.1px">5,31 %</div>
<div class="t" style="left:342.6px;top:363px;transform-origin:0 0;transform:rotate(90deg);-webkit-text-stroke:0.1px">Digital 8</div>
<div class="t" style="left:365.05px;width:50px;text-align:center;top:321px;-webkit-text-stroke:0.1px">0,88 %</div>
<div class="t" style="left:389.85px;top:363px;transform-origin:0 0;transform:rotate(90deg);-webkit-text-stroke:0.1px">Weitere</div>
<div style="position:absolute;left:435.5px;top:86px;width:155px;height:26px;border:1px solid;border-color:#A28D68 #EAE6DD #EAE6DD #A28D68"></div>
<div style="position:absolute;left:436.5px;top:87px;width:153px;height:24px;border:1px solid;border-color:#EAE6DD #A28D68 #A28D68 #EAE6DD"></div>
<div class="t" style="left:439.5px;top:82.6px;padding:0 1px;background:#D5CCBB">Diagramm-Art:</div>
<svg style="left:441px;top:95.5px" width="12" height="12"><circle cx="6" cy="6" r="3.9" fill="#fff"/><path d="M2.75,9.25 A4.6,4.6 0 0 1 9.25,2.75" fill="none" stroke="#A28D68" stroke-width="1"/><path d="M9.25,2.75 A4.6,4.6 0 0 1 2.75,9.25" fill="none" stroke="#EAE6DD" stroke-width="1"/><path d="M3.45,8.55 A3.6,3.6 0 0 1 8.55,3.45" fill="none" stroke="#000" stroke-width="1.1"/><path d="M8.55,3.45 A3.6,3.6 0 0 1 3.45,8.55" fill="none" stroke="#F4F0EA" stroke-width="0.8"/></svg>
<div class="t" style="left:455px;top:96.5px;">Kreis</div>
<svg style="left:484.3px;top:95.5px" width="12" height="12"><circle cx="6" cy="6" r="3.9" fill="#fff"/><path d="M2.75,9.25 A4.6,4.6 0 0 1 9.25,2.75" fill="none" stroke="#A28D68" stroke-width="1"/><path d="M9.25,2.75 A4.6,4.6 0 0 1 2.75,9.25" fill="none" stroke="#EAE6DD" stroke-width="1"/><path d="M3.45,8.55 A3.6,3.6 0 0 1 8.55,3.45" fill="none" stroke="#000" stroke-width="1.1"/><path d="M8.55,3.45 A3.6,3.6 0 0 1 3.45,8.55" fill="none" stroke="#F4F0EA" stroke-width="0.8"/><circle cx="6" cy="6" r="1.6" fill="#000"/></svg>
<div class="t" style="left:499.4px;top:96.5px;">Säulen</div>
<svg style="left:535.3px;top:95.5px" width="12" height="12"><circle cx="6" cy="6" r="3.9" fill="#fff"/><path d="M2.75,9.25 A4.6,4.6 0 0 1 9.25,2.75" fill="none" stroke="#A28D68" stroke-width="1"/><path d="M9.25,2.75 A4.6,4.6 0 0 1 2.75,9.25" fill="none" stroke="#EAE6DD" stroke-width="1"/><path d="M3.45,8.55 A3.6,3.6 0 0 1 8.55,3.45" fill="none" stroke="#000" stroke-width="1.1"/><path d="M8.55,3.45 A3.6,3.6 0 0 1 3.45,8.55" fill="none" stroke="#F4F0EA" stroke-width="0.8"/></svg>
<div class="t" style="left:549.5px;top:96.5px;">Balken</div>
<div style="position:absolute;left:435.5px;top:116px;width:155px;height:36px;border:1px solid;border-color:#A28D68 #EAE6DD #EAE6DD #A28D68"></div>
<div style="position:absolute;left:436.5px;top:117px;width:153px;height:34px;border:1px solid;border-color:#EAE6DD #A28D68 #A28D68 #EAE6DD"></div>
<svg style="left:441px;top:122.69999999999999px" width="12" height="12"><circle cx="6" cy="6" r="3.9" fill="#fff"/><path d="M2.75,9.25 A4.6,4.6 0 0 1 9.25,2.75" fill="none" stroke="#A28D68" stroke-width="1"/><path d="M9.25,2.75 A4.6,4.6 0 0 1 2.75,9.25" fill="none" stroke="#EAE6DD" stroke-width="1"/><path d="M3.45,8.55 A3.6,3.6 0 0 1 8.55,3.45" fill="none" stroke="#000" stroke-width="1.1"/><path d="M8.55,3.45 A3.6,3.6 0 0 1 3.45,8.55" fill="none" stroke="#F4F0EA" stroke-width="0.8"/><circle cx="6" cy="6" r="1.6" fill="#000"/></svg>
<div class="t" style="left:455.5px;top:123.7px;">Prozent anzeigen</div>
<svg style="left:441px;top:135px" width="12" height="12"><circle cx="6" cy="6" r="3.9" fill="#fff"/><path d="M2.75,9.25 A4.6,4.6 0 0 1 9.25,2.75" fill="none" stroke="#A28D68" stroke-width="1"/><path d="M9.25,2.75 A4.6,4.6 0 0 1 2.75,9.25" fill="none" stroke="#EAE6DD" stroke-width="1"/><path d="M3.45,8.55 A3.6,3.6 0 0 1 8.55,3.45" fill="none" stroke="#000" stroke-width="1.1"/><path d="M8.55,3.45 A3.6,3.6 0 0 1 3.45,8.55" fill="none" stroke="#F4F0EA" stroke-width="0.8"/></svg>
<div class="t" style="left:455.5px;top:136px;">Anzahl anzeigen</div>
<div class="t" style="left:439.3px;top:162.8px;">Unter</div>
<div style="position:absolute;left:467px;top:159.5px;width:13px;height:14px;border:1px solid;border-color:#A28D68 #EAE6DD #EAE6DD #A28D68;background:#fff;"><div style="position:absolute;left:0;top:0;right:0;bottom:0;border:1px solid;border-color:#000000 #D5CCBB #D5CCBB #000000"></div><div class="t" style="left:1.5px;top:2.5px;width:12px;text-align:center;font-size:10px">3</div></div>
<div style="position:absolute;left:482px;top:159.5px;width:9px;height:6px;border:1px solid;border-color:#EAE6DD #000000 #000000 #EAE6DD;background:#D5CCBB;"><div style="position:absolute;left:0;top:0;right:0;bottom:0;border:1px solid;border-color:#D5CCBB #A28D68 #A28D68 #D5CCBB"></div></div>
<div style="position:absolute;left:482px;top:167.5px;width:9px;height:6px;border:1px solid;border-color:#EAE6DD #000000 #000000 #EAE6DD;background:#D5CCBB;"><div style="position:absolute;left:0;top:0;right:0;bottom:0;border:1px solid;border-color:#D5CCBB #A28D68 #A28D68 #D5CCBB"></div></div>
<svg style="left:485.5px;top:162.5px" width="4" height="2"><path d="M2,0 L4,2 L0,2Z" fill="#000"/></svg>
<svg style="left:485.5px;top:170.5px" width="4" height="2"><path d="M0,0 L4,0 L2,2Z" fill="#000"/></svg>
<div class="t" style="left:495.7px;top:162.8px;">zusammenfassen</div>
<div style="position:absolute;left:435.5px;top:184.5px;width:155px;height:231px;border:1px solid;border-color:#A28D68 #EAE6DD #EAE6DD #A28D68"></div>
<div style="position:absolute;left:436.5px;top:185.5px;width:153px;height:229px;border:1px solid;border-color:#EAE6DD #A28D68 #A28D68 #EAE6DD"></div>
<svg style="left:440.8px;top:192.3px" width="12" height="12"><circle cx="6" cy="6" r="3.9" fill="#fff"/><path d="M2.75,9.25 A4.6,4.6 0 0 1 9.25,2.75" fill="none" stroke="#A28D68" stroke-width="1"/><path d="M9.25,2.75 A4.6,4.6 0 0 1 2.75,9.25" fill="none" stroke="#EAE6DD" stroke-width="1"/><path d="M3.45,8.55 A3.6,3.6 0 0 1 8.55,3.45" fill="none" stroke="#000" stroke-width="1.1"/><path d="M8.55,3.45 A3.6,3.6 0 0 1 3.45,8.55" fill="none" stroke="#F4F0EA" stroke-width="0.8"/></svg>
<div class="t" style="left:455.4px;top:193.3px;">Medien-Art</div>
<svg style="left:440.8px;top:207.23000000000002px" width="12" height="12"><circle cx="6" cy="6" r="3.9" fill="#fff"/><path d="M2.75,9.25 A4.6,4.6 0 0 1 9.25,2.75" fill="none" stroke="#A28D68" stroke-width="1"/><path d="M9.25,2.75 A4.6,4.6 0 0 1 2.75,9.25" fill="none" stroke="#EAE6DD" stroke-width="1"/><path d="M3.45,8.55 A3.6,3.6 0 0 1 8.55,3.45" fill="none" stroke="#000" stroke-width="1.1"/><path d="M8.55,3.45 A3.6,3.6 0 0 1 3.45,8.55" fill="none" stroke="#F4F0EA" stroke-width="0.8"/></svg>
<div class="t" style="left:455.4px;top:208.23000000000002px;">Arten</div>
<svg style="left:440.8px;top:222.16000000000003px" width="12" height="12"><circle cx="6" cy="6" r="3.9" fill="#fff"/><path d="M2.75,9.25 A4.6,4.6 0 0 1 9.25,2.75" fill="none" stroke="#A28D68" stroke-width="1"/><path d="M9.25,2.75 A4.6,4.6 0 0 1 2.75,9.25" fill="none" stroke="#EAE6DD" stroke-width="1"/><path d="M3.45,8.55 A3.6,3.6 0 0 1 8.55,3.45" fill="none" stroke="#000" stroke-width="1.1"/><path d="M8.55,3.45 A3.6,3.6 0 0 1 3.45,8.55" fill="none" stroke="#F4F0EA" stroke-width="0.8"/></svg>
<div class="t" style="left:455.4px;top:223.16000000000003px;">Standorte</div>
<svg style="left:440.8px;top:237.09px" width="12" height="12"><circle cx="6" cy="6" r="3.9" fill="#fff"/><path d="M2.75,9.25 A4.6,4.6 0 0 1 9.25,2.75" fill="none" stroke="#A28D68" stroke-width="1"/><path d="M9.25,2.75 A4.6,4.6 0 0 1 2.75,9.25" fill="none" stroke="#EAE6DD" stroke-width="1"/><path d="M3.45,8.55 A3.6,3.6 0 0 1 8.55,3.45" fill="none" stroke="#000" stroke-width="1.1"/><path d="M8.55,3.45 A3.6,3.6 0 0 1 3.45,8.55" fill="none" stroke="#F4F0EA" stroke-width="0.8"/></svg>
<div class="t" style="left:455.4px;top:238.09px;">Projekte</div>
<svg style="left:440.8px;top:252.01999999999998px" width="12" height="12"><circle cx="6" cy="6" r="3.9" fill="#fff"/><path d="M2.75,9.25 A4.6,4.6 0 0 1 9.25,2.75" fill="none" stroke="#A28D68" stroke-width="1"/><path d="M9.25,2.75 A4.6,4.6 0 0 1 2.75,9.25" fill="none" stroke="#EAE6DD" stroke-width="1"/><path d="M3.45,8.55 A3.6,3.6 0 0 1 8.55,3.45" fill="none" stroke="#000" stroke-width="1.1"/><path d="M8.55,3.45 A3.6,3.6 0 0 1 3.45,8.55" fill="none" stroke="#F4F0EA" stroke-width="0.8"/></svg>
<div class="t" style="left:455.4px;top:253.01999999999998px;">Kassetten-Längen</div>
<svg style="left:440.8px;top:266.95000000000005px" width="12" height="12"><circle cx="6" cy="6" r="3.9" fill="#fff"/><path d="M2.75,9.25 A4.6,4.6 0 0 1 9.25,2.75" fill="none" stroke="#A28D68" stroke-width="1"/><path d="M9.25,2.75 A4.6,4.6 0 0 1 2.75,9.25" fill="none" stroke="#EAE6DD" stroke-width="1"/><path d="M3.45,8.55 A3.6,3.6 0 0 1 8.55,3.45" fill="none" stroke="#000" stroke-width="1.1"/><path d="M8.55,3.45 A3.6,3.6 0 0 1 3.45,8.55" fill="none" stroke="#F4F0EA" stroke-width="0.8"/></svg>
<div class="t" style="left:455.4px;top:267.95000000000005px;">Kassetten-Systeme</div>
<svg style="left:440.8px;top:281.88px" width="12" height="12"><circle cx="6" cy="6" r="3.9" fill="#fff"/><path d="M2.75,9.25 A4.6,4.6 0 0 1 9.25,2.75" fill="none" stroke="#A28D68" stroke-width="1"/><path d="M9.25,2.75 A4.6,4.6 0 0 1 2.75,9.25" fill="none" stroke="#EAE6DD" stroke-width="1"/><path d="M3.45,8.55 A3.6,3.6 0 0 1 8.55,3.45" fill="none" stroke="#000" stroke-width="1.1"/><path d="M8.55,3.45 A3.6,3.6 0 0 1 3.45,8.55" fill="none" stroke="#F4F0EA" stroke-width="0.8"/></svg>
<div class="t" style="left:455.4px;top:282.88px;">Kassetten-Hersteller</div>
<svg style="left:440.8px;top:296.81px" width="12" height="12"><circle cx="6" cy="6" r="3.9" fill="#fff"/><path d="M2.75,9.25 A4.6,4.6 0 0 1 9.25,2.75" fill="none" stroke="#A28D68" stroke-width="1"/><path d="M9.25,2.75 A4.6,4.6 0 0 1 2.75,9.25" fill="none" stroke="#EAE6DD" stroke-width="1"/><path d="M3.45,8.55 A3.6,3.6 0 0 1 8.55,3.45" fill="none" stroke="#000" stroke-width="1.1"/><path d="M8.55,3.45 A3.6,3.6 0 0 1 3.45,8.55" fill="none" stroke="#F4F0EA" stroke-width="0.8"/></svg>
<div class="t" style="left:455.4px;top:297.81px;">Kassetten-Typen</div>
<svg style="left:440.8px;top:311.74px" width="12" height="12"><circle cx="6" cy="6" r="3.9" fill="#fff"/><path d="M2.75,9.25 A4.6,4.6 0 0 1 9.25,2.75" fill="none" stroke="#A28D68" stroke-width="1"/><path d="M9.25,2.75 A4.6,4.6 0 0 1 2.75,9.25" fill="none" stroke="#EAE6DD" stroke-width="1"/><path d="M3.45,8.55 A3.6,3.6 0 0 1 8.55,3.45" fill="none" stroke="#000" stroke-width="1.1"/><path d="M8.55,3.45 A3.6,3.6 0 0 1 3.45,8.55" fill="none" stroke="#F4F0EA" stroke-width="0.8"/><circle cx="6" cy="6" r="1.6" fill="#000"/></svg>
<div class="t" style="left:455.4px;top:312.74px;">Videonormen</div>
<svg style="left:440.8px;top:326.67px" width="12" height="12"><circle cx="6" cy="6" r="3.9" fill="#fff"/><path d="M2.75,9.25 A4.6,4.6 0 0 1 9.25,2.75" fill="none" stroke="#A28D68" stroke-width="1"/><path d="M9.25,2.75 A4.6,4.6 0 0 1 2.75,9.25" fill="none" stroke="#EAE6DD" stroke-width="1"/><path d="M3.45,8.55 A3.6,3.6 0 0 1 8.55,3.45" fill="none" stroke="#000" stroke-width="1.1"/><path d="M8.55,3.45 A3.6,3.6 0 0 1 3.45,8.55" fill="none" stroke="#F4F0EA" stroke-width="0.8"/></svg>
<div class="t" style="left:455.4px;top:327.67px;">Ext. Medien-Systeme</div>
<svg style="left:440.8px;top:341.6px" width="12" height="12"><circle cx="6" cy="6" r="3.9" fill="#fff"/><path d="M2.75,9.25 A4.6,4.6 0 0 1 9.25,2.75" fill="none" stroke="#A28D68" stroke-width="1"/><path d="M9.25,2.75 A4.6,4.6 0 0 1 2.75,9.25" fill="none" stroke="#EAE6DD" stroke-width="1"/><path d="M3.45,8.55 A3.6,3.6 0 0 1 8.55,3.45" fill="none" stroke="#000" stroke-width="1.1"/><path d="M8.55,3.45 A3.6,3.6 0 0 1 3.45,8.55" fill="none" stroke="#F4F0EA" stroke-width="0.8"/></svg>
<div class="t" style="left:455.4px;top:342.6px;">Ext. Medien-Hersteller</div>
<svg style="left:440.8px;top:356.53px" width="12" height="12"><circle cx="6" cy="6" r="3.9" fill="#fff"/><path d="M2.75,9.25 A4.6,4.6 0 0 1 9.25,2.75" fill="none" stroke="#A28D68" stroke-width="1"/><path d="M9.25,2.75 A4.6,4.6 0 0 1 2.75,9.25" fill="none" stroke="#EAE6DD" stroke-width="1"/><path d="M3.45,8.55 A3.6,3.6 0 0 1 8.55,3.45" fill="none" stroke="#000" stroke-width="1.1"/><path d="M8.55,3.45 A3.6,3.6 0 0 1 3.45,8.55" fill="none" stroke="#F4F0EA" stroke-width="0.8"/></svg>
<div class="t" style="left:455.4px;top:357.53px;">Ext. Medien-Typen</div>
<svg style="left:440.8px;top:371.46000000000004px" width="12" height="12"><circle cx="6" cy="6" r="3.9" fill="#fff"/><path d="M2.75,9.25 A4.6,4.6 0 0 1 9.25,2.75" fill="none" stroke="#A28D68" stroke-width="1"/><path d="M9.25,2.75 A4.6,4.6 0 0 1 2.75,9.25" fill="none" stroke="#EAE6DD" stroke-width="1"/><path d="M3.45,8.55 A3.6,3.6 0 0 1 8.55,3.45" fill="none" stroke="#000" stroke-width="1.1"/><path d="M8.55,3.45 A3.6,3.6 0 0 1 3.45,8.55" fill="none" stroke="#F4F0EA" stroke-width="0.8"/></svg>
<div class="t" style="left:455.4px;top:372.46000000000004px;">DVD/CD-Systeme</div>
<svg style="left:440.8px;top:386.39px" width="12" height="12"><circle cx="6" cy="6" r="3.9" fill="#fff"/><path d="M2.75,9.25 A4.6,4.6 0 0 1 9.25,2.75" fill="none" stroke="#A28D68" stroke-width="1"/><path d="M9.25,2.75 A4.6,4.6 0 0 1 2.75,9.25" fill="none" stroke="#EAE6DD" stroke-width="1"/><path d="M3.45,8.55 A3.6,3.6 0 0 1 8.55,3.45" fill="none" stroke="#000" stroke-width="1.1"/><path d="M8.55,3.45 A3.6,3.6 0 0 1 3.45,8.55" fill="none" stroke="#F4F0EA" stroke-width="0.8"/></svg>
<div class="t" style="left:455.4px;top:387.39px;">DVD/CD-Hersteller</div>
<svg style="left:440.8px;top:401.32px" width="12" height="12"><circle cx="6" cy="6" r="3.9" fill="#fff"/><path d="M2.75,9.25 A4.6,4.6 0 0 1 9.25,2.75" fill="none" stroke="#A28D68" stroke-width="1"/><path d="M9.25,2.75 A4.6,4.6 0 0 1 2.75,9.25" fill="none" stroke="#EAE6DD" stroke-width="1"/><path d="M3.45,8.55 A3.6,3.6 0 0 1 8.55,3.45" fill="none" stroke="#000" stroke-width="1.1"/><path d="M8.55,3.45 A3.6,3.6 0 0 1 3.45,8.55" fill="none" stroke="#F4F0EA" stroke-width="0.8"/></svg>
<div class="t" style="left:455.4px;top:402.32px;">DVD/CD-Typen</div>
<div style="position:absolute;left:454.5px;top:311px;width:50px;height:11px;border:1px dotted #505050"></div>
<div class="t" style="left:17.5px;top:435px;">Registriert für</div>
<div style="position:absolute;left:74px;top:433px;width:136px;height:13px;border:1px solid;border-color:#A28D68 #EAE6DD #EAE6DD #A28D68"><div class="t" style="left:1px;top:1.5px;width:134px;text-align:left;letter-spacing:-0.3px">Bernd Heyer</div></div>
<div class="t" style="left:228.3px;top:435px;">Medien:</div>
<div style="position:absolute;left:261.7px;top:433px;width:34.60000000000002px;height:13px;border:1px solid;border-color:#A28D68 #EAE6DD #EAE6DD #A28D68"><div class="t" style="left:2px;top:1.5px;width:30.600000000000023px;text-align:center;letter-spacing:-0.3px">116</div></div>
<div class="t" style="left:310px;top:435px;">Titel:</div>
<div style="position:absolute;left:333.3px;top:433px;width:34.69999999999999px;height:13px;border:1px solid;border-color:#A28D68 #EAE6DD #EAE6DD #A28D68"><div class="t" style="left:2px;top:1.5px;width:30.69999999999999px;text-align:center;letter-spacing:-0.3px">282</div></div>
<div class="t" style="left:388px;top:435px;">Datenbank:</div>
<div style="position:absolute;left:435.2px;top:433px;width:159.8px;height:13px;border:1px solid;border-color:#A28D68 #EAE6DD #EAE6DD #A28D68"><div class="t" style="left:1px;top:1.5px;width:157.8px;text-align:left;letter-spacing:-0.1px">Test3 (C:\Test-Daten\HVO2-Test3\)</div></div>
<svg style="left:585px;top:436px" width="11" height="11"><path d="M10,1 L1,10 M10,4 L4,10 M10,7 L7,10" stroke="#808080" stroke-width="1"/><path d="M10,2 L2,10 M10,5 L5,10 M10,8 L8,10" stroke="#fff" stroke-width="1"/></svg>
</body></html>
